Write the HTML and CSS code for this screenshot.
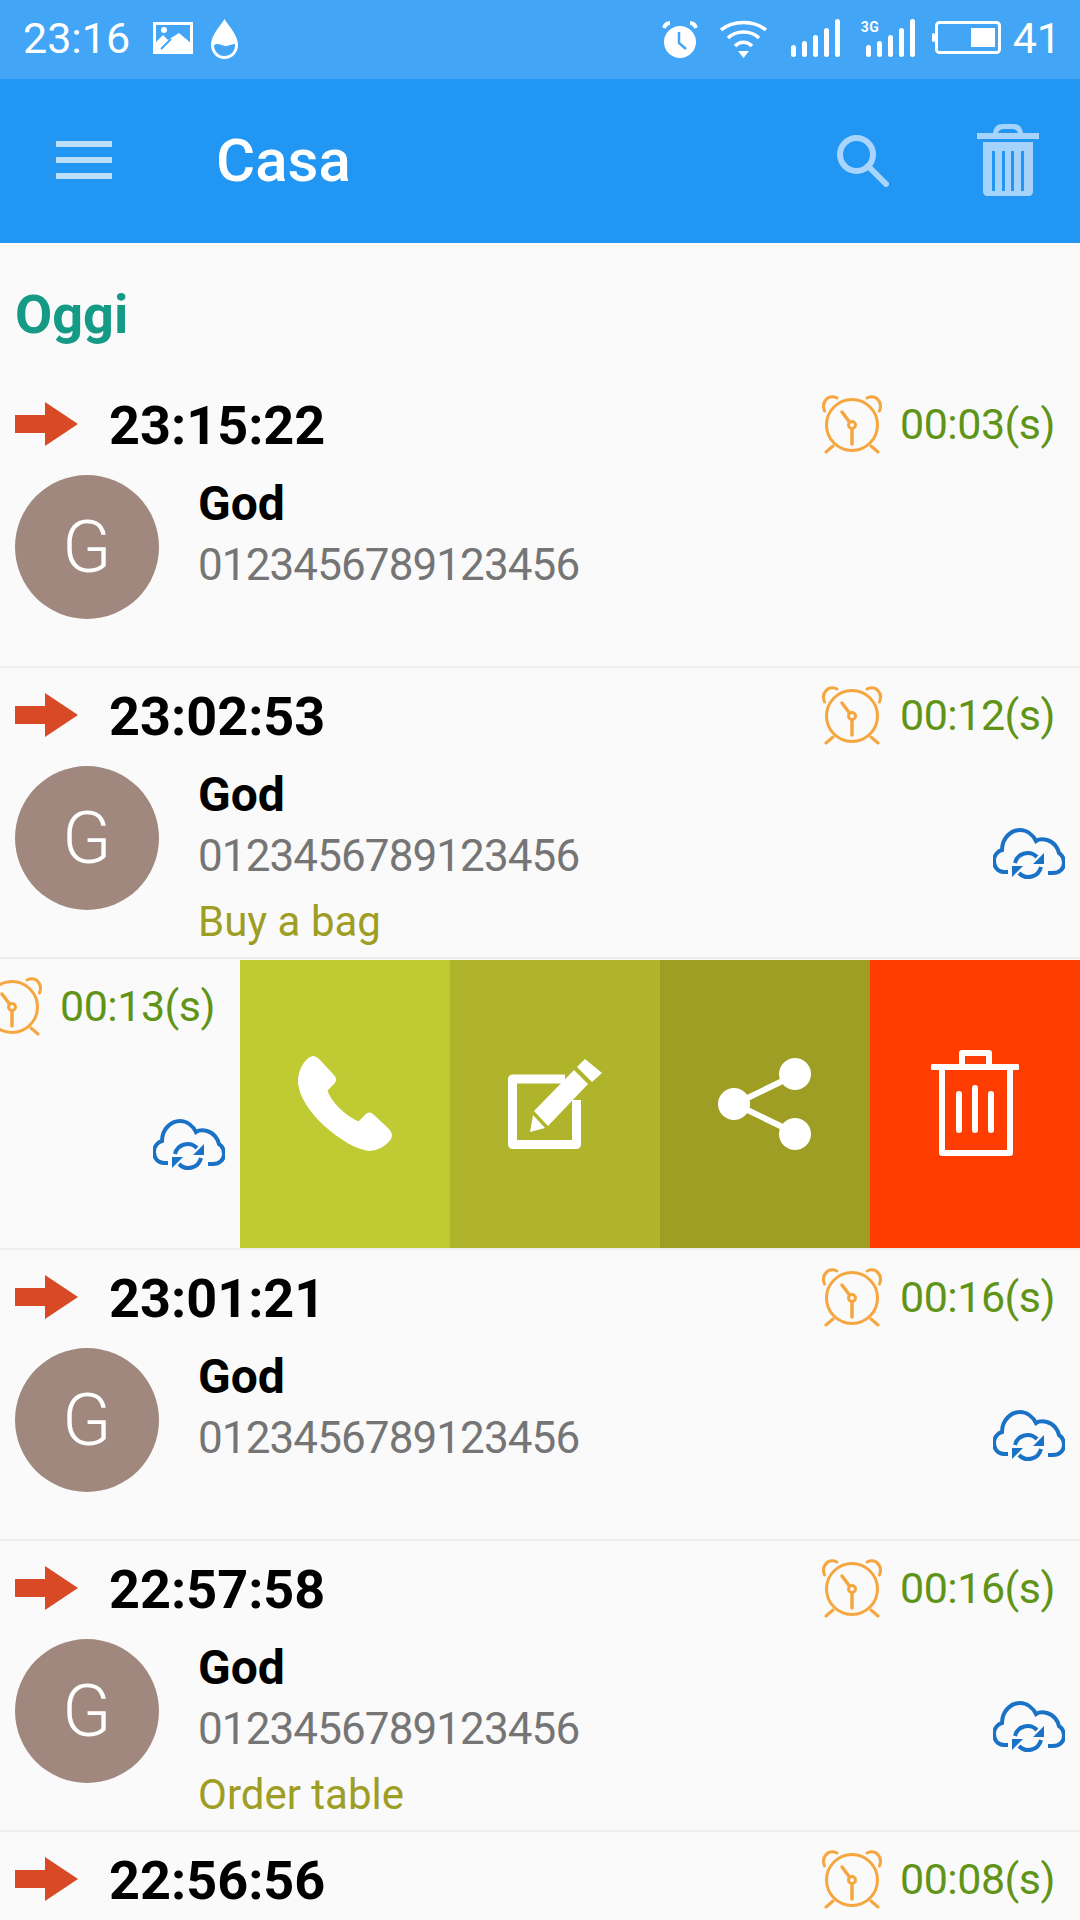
FILE: index.html
```html
<!DOCTYPE html>
<html lang="it">
<head>
<meta charset="utf-8">
<title>Casa</title>
<link rel="stylesheet" href="styles.css">
</head>
<body>
<svg class="defs" width="0" height="0" aria-hidden="true">
  <symbol id="i-alarm" viewBox="0 0 60 60">
    <g fill="none" stroke="#f6a63f" stroke-width="3" stroke-linecap="round">
      <circle cx="30" cy="31" r="25.500"/>
      <path d="M2.500 17 C-1 8 6 0 15 4"/>
      <path d="M57.500 17 C61 8 54 0 45 4"/>
      <path d="M4 58 L11 52 M56 58 L49 52"/>
      <circle cx="30" cy="31" r="3.500"/>
      <path d="M27.500 28 L20 18 M30 35 V50" stroke-width="3.500"/>
    </g>
  </symbol>
  <symbol id="i-cloud" viewBox="0 0 72 54">
    <g fill="none" stroke="#1a72c6" stroke-width="4">
      <path d="M15 44 H11 C4 44 1 38 1 33 C1 27 5 23 9 22 C9 10 18 2 27 2 C34 2 40 7 43 13 C46 11 50 11 54 12 C61 14 65 20 66 25 C69 27 71 31 71 35 C71 41 66 45 60 45 H55"/>
      <path d="M22 35 A13 13 0 0 1 44 29"/>
      <path d="M48 39 A13 13 0 0 1 26 45"/>
    </g>
    <path fill="#1a72c6" d="M51 25 V36 H40 Z M19 49 V38 H30 Z"/>
  </symbol>
  <symbol id="i-arrow" viewBox="0 0 63 44">
    <path fill="#d84a26" d="M0 13 H30 V0 L63 22 L30 44 V31 H0 Z"/>
  </symbol>
</svg>

<header class="status">
  <span class="status-text">23:16</span>
  <svg class="st-image" viewBox="0 0 40 32">
    <rect x="1.500" y="1.500" width="37" height="29" fill="none" stroke="#fff" stroke-width="3"/>
    <circle cx="11" cy="8" r="3" fill="#fff"/>
    <path fill="#fff" d="M1 31 V22 L10 13 L15 18 L26 11 L39 22 V31 Z"/>
    <path fill="none" stroke="#42a5f5" stroke-width="2" d="M8 27 L18 17"/>
  </svg>
  <svg class="st-drop" viewBox="0 0 27 40">
    <path fill="#fff" d="M13.500 0 C17 6 27 16 27 26 C27 34 21 40 13.500 40 C6 40 0 34 0 26 C0 16 10 6 13.500 0 Z"/>
    <path fill="#42a5f5" d="M3 26 C8 23 12 28 16 27 C19 26 21 25 24 25 C24.500 32 20 37 13.500 37 C7 37 3 32 3 26 Z"/>
  </svg>
  <span class="status-spacer"></span>
  <svg class="st-alarm" viewBox="0 0 36 37">
    <circle cx="18" cy="21" r="16" fill="#fff"/>
    <path fill="none" stroke="#fff" stroke-width="4" d="M2 7 C3 4 5 2 8 2 M34 7 C33 4 31 2 28 2"/>
    <path fill="none" stroke="#42a5f5" stroke-width="2.500" d="M17 11 V22 L24 28"/>
  </svg>
  <svg class="st-wifi" viewBox="0 0 47 39">
    <g fill="none" stroke="#fff" stroke-width="3.500">
      <path d="M1 11 C13 1 34 1 46 11"/>
      <path d="M8 19 C16 11 31 11 39 19"/>
      <path d="M15 27 C20 22 27 22 32 27"/>
    </g>
    <path fill="#fff" d="M18 32 H29 L23.500 39 Z"/>
  </svg>
  <svg class="st-signal" viewBox="0 0 50 38">
    <g fill="#fff">
      <rect x="0" y="26" width="5" height="12" rx="2.500"/>
      <rect x="11" y="22" width="5" height="16" rx="2.500"/>
      <rect x="22" y="16" width="5" height="22" rx="2.500"/>
      <rect x="33" y="9" width="5" height="29" rx="2.500"/>
      <rect x="44" y="0" width="5" height="38" rx="2.500"/>
    </g>
  </svg>
  <div class="st-signal-wrap">
    <span class="badge-3g">3G</span>
    <svg class="st-signal st-signal-b" viewBox="0 0 50 38">
      <g fill="#fff">
        <rect x="0" y="26" width="5" height="12" rx="2.500"/>
        <rect x="11" y="22" width="5" height="16" rx="2.500"/>
        <rect x="22" y="16" width="5" height="22" rx="2.500"/>
        <rect x="33" y="9" width="5" height="29" rx="2.500"/>
        <rect x="44" y="0" width="5" height="38" rx="2.500"/>
      </g>
    </svg>
  </div>
  <svg class="st-battery" viewBox="0 0 69 33">
    <rect x="4.500" y="1.500" width="63" height="30" rx="3" fill="none" stroke="#fff" stroke-width="3"/>
    <rect x="39" y="7" width="24" height="19" fill="#fff"/>
    <rect x="0" y="12" width="3" height="9" rx="1.500" fill="#fff"/>
  </svg>
  <span class="status-text status-num">41</span>
</header>

<nav class="appbar">
  <div class="menu"><i></i><i></i><i></i></div>
  <h1 class="title">Casa</h1>
  <svg class="search" viewBox="0 0 52 52">
    <g fill="none" stroke="#a8d5fb" stroke-width="6">
      <circle cx="19.500" cy="19.500" r="16.500"/>
      <path d="M31 31 L49 49" stroke-linecap="round"/>
    </g>
  </svg>
  <svg class="bar-trash" viewBox="0 0 62 72">
    <path fill="#a6d3fb" fill-rule="evenodd" d="M0 9 H16 C17 3 20 0 26 0 H36 C42 0 45 3 46 9 H62 V15 H0 Z M21 9 H41 C40 6 38 5 35 5 H27 C24 5 22 6 21 9 Z"/>
    <path fill="#a6d3fb" d="M6 18 H56 V68 C56 70 54 72 52 72 H10 C8 72 6 70 6 68 Z"/>
    <path fill="#2196f3" d="M15 27 H18 V67 H15 Z M25 27 H28 V67 H25 Z M34 27 H37 V67 H34 Z M44 27 H47 V67 H44 Z"/>
  </svg>
</nav>

<main class="list">
  <h2 class="section">Oggi</h2>

  <article class="row">
    <div class="row-top">
      <svg class="arrow"><use href="#i-arrow"/></svg>
      <span class="time">23:15:22</span>
      <svg class="alarm"><use href="#i-alarm"/></svg>
      <span class="dur">00:03(s)</span>
    </div>
    <div class="row-main">
      <div class="avatar">G</div>
      <div class="details">
        <div class="name">God</div>
        <div class="phone">0123456789123456</div>
      </div>
    </div>
  </article>

  <article class="row">
    <div class="row-top">
      <svg class="arrow"><use href="#i-arrow"/></svg>
      <span class="time">23:02:53</span>
      <svg class="alarm"><use href="#i-alarm"/></svg>
      <span class="dur">00:12(s)</span>
    </div>
    <div class="row-main">
      <div class="avatar">G</div>
      <div class="details">
        <div class="name">God</div>
        <div class="phone">0123456789123456</div>
        <div class="note">Buy a bag</div>
      </div>
      <svg class="cloud"><use href="#i-cloud"/></svg>
    </div>
  </article>

  <article class="row row-swiped">
    <div class="row-shift">
      <div class="row-top">
        <svg class="alarm"><use href="#i-alarm"/></svg>
        <span class="dur">00:13(s)</span>
      </div>
      <div class="row-main">
        <svg class="cloud"><use href="#i-cloud"/></svg>
      </div>
    </div>
    <div class="actions">
      <div class="action act-call">
        <svg class="ic-call" viewBox="-1 -1 96 97"><path fill="#fff" stroke="#fff" stroke-width="2" stroke-linejoin="round" d="M14 0 C17 0 19 2 21 4 L35 19 C38 22 37 25 35 27 L28 34 C31 45 45 60 61 67 L68 60 C70 57 73 57 76 60 L91 74 C95 78 95 81 92 85 C86 92 79 95 71 95 C45 91 4 56 0 27 C-1 17 5 3 14 0 Z"/></svg>
      </div>
      <div class="action act-edit">
        <svg class="ic-edit" viewBox="0 0 94 90">
          <path fill="none" stroke="#fff" stroke-width="9" stroke-linejoin="round" d="M57 20 H4.500 V85.500 H68.500 V41"/>
          <path fill="#fff" d="M26 52 L66 11 L80 25 L40 67 Z M22 73 L25 56 L37 69 Z M69 8 L77 0 L94 14 L84 23 Z"/>
        </svg>
      </div>
      <div class="action act-share">
        <svg class="ic-share" viewBox="0 0 94 92">
          <path fill="none" stroke="#fff" stroke-width="6" d="M77 17 L17 46 L77 75"/>
          <circle cx="77" cy="16" r="16" fill="#fff"/>
          <circle cx="16" cy="46" r="16" fill="#fff"/>
          <circle cx="77" cy="76" r="16" fill="#fff"/>
        </svg>
      </div>
      <div class="action act-del">
        <svg class="ic-trash" viewBox="0 0 88 106">
          <g fill="none" stroke="#fff" stroke-width="6" stroke-linecap="round" stroke-linejoin="round">
            <path d="M2 17 H86"/>
            <path d="M31 17 V3 H58 V17"/>
            <path d="M11 17 V103 H79 V17"/>
            <path d="M28 44 V80 M44 38 V80 M60 44 V80"/>
          </g>
        </svg>
      </div>
    </div>
  </article>

  <article class="row">
    <div class="row-top">
      <svg class="arrow"><use href="#i-arrow"/></svg>
      <span class="time">23:01:21</span>
      <svg class="alarm"><use href="#i-alarm"/></svg>
      <span class="dur">00:16(s)</span>
    </div>
    <div class="row-main">
      <div class="avatar">G</div>
      <div class="details">
        <div class="name">God</div>
        <div class="phone">0123456789123456</div>
      </div>
      <svg class="cloud"><use href="#i-cloud"/></svg>
    </div>
  </article>

  <article class="row">
    <div class="row-top">
      <svg class="arrow"><use href="#i-arrow"/></svg>
      <span class="time">22:57:58</span>
      <svg class="alarm"><use href="#i-alarm"/></svg>
      <span class="dur">00:16(s)</span>
    </div>
    <div class="row-main">
      <div class="avatar">G</div>
      <div class="details">
        <div class="name">God</div>
        <div class="phone">0123456789123456</div>
        <div class="note">Order table</div>
      </div>
      <svg class="cloud"><use href="#i-cloud"/></svg>
    </div>
  </article>

  <article class="row">
    <div class="row-top">
      <svg class="arrow"><use href="#i-arrow"/></svg>
      <span class="time">22:56:56</span>
      <svg class="alarm"><use href="#i-alarm"/></svg>
      <span class="dur">00:08(s)</span>
    </div>
  </article>
</main>
</body>
</html>
```
FILE: styles.css
```css
* { box-sizing: border-box; }
html, body { margin: 0; padding: 0; }
body {
  width: 1080px;
  height: 1920px;
  overflow: hidden;
  background: #fafafa;
  font-family: Roboto, "Liberation Sans", sans-serif;
}
.defs { display: block; height: 0; }

/* status bar */
.status {
  height: 79px;
  background: #42a5f5;
  display: flex;
  align-items: center;
  padding: 0 19px 0 23px;
  color: #fff;
}
.status-text { font-size: 43px; font-weight: 400; line-height: 1; margin-top: -3px; }
.status-num { margin-left: 12px; }
.status-spacer { flex: 1; }
.st-image { width: 40px; height: 32px; margin-left: 23px; margin-top: -4px; }
.st-drop { width: 27px; height: 40px; margin-left: 18px; margin-top: -1px; }
.st-alarm { width: 36px; height: 37px; margin-top: -1px; }
.st-wifi { width: 47px; height: 39px; margin-left: 22px; margin-top: -2px; }
.st-signal { width: 50px; height: 38px; margin-left: 24px; margin-top: -3px; display: block; }
.st-signal-wrap { position: relative; margin-left: 25px; margin-top: -3px; }
.st-signal-b { margin: 0; }
.badge-3g {
  position: absolute;
  left: -5px;
  top: 1px;
  font-size: 14px;
  font-weight: 700;
  line-height: 14px;
  letter-spacing: 0.5px;
}
.st-battery { width: 69px; height: 33px; margin-left: 16px; margin-top: -4px; }

/* app bar */
.appbar {
  height: 164px;
  background: #2196f3;
  display: flex;
  align-items: center;
  padding: 0 41px 0 56px;
}
.menu { width: 56px; display: flex; flex-direction: column; gap: 10px; margin-top: -2px; }
.menu i { display: block; height: 6px; background: #bbdefb; }
.title {
  margin: 0 0 0 104px;
  flex: 1;
  color: #fff;
  font-size: 60px;
  font-weight: 500;
  line-height: 1;
}
.search { width: 52px; height: 52px; margin-right: 88px; }
.bar-trash { width: 62px; height: 72px; margin-top: -2px; }

/* list */
.section {
  margin: 0;
  height: 134px;
  padding: 44px 0 0 15px;
  color: #159a85;
  font-size: 54px;
  font-weight: 700;
  line-height: 56px;
}
.row {
  height: 291px;
  border-bottom: 2px solid #eeeeee;
  position: relative;
  overflow: hidden;
}
.row-top {
  height: 98px;
  display: flex;
  align-items: center;
  padding: 0 25px 0 15px;
}
.arrow { width: 63px; height: 44px; margin-top: -4px; }
.time {
  margin-left: 31px;
  flex: 1;
  font-size: 54px;
  font-weight: 700;
  line-height: 1;
  color: #000;
}
.alarm { width: 60px; height: 60px; margin-top: -4px; }
.dur {
  margin-left: 18px;
  font-size: 43px;
  letter-spacing: -0.5px;
  line-height: 1;
  color: #5f9418;
  margin-top: -4px;
}
.row-main {
  display: flex;
  align-items: flex-start;
  padding: 0 15px;
}
.avatar {
  width: 144px;
  height: 144px;
  border-radius: 50%;
  background: #a1887f;
  color: #fff;
  font-size: 72px;
  font-weight: 300;
  display: flex;
  align-items: center;
  justify-content: center;
  flex: none;
}
.details { margin-left: 39px; flex: 1; }
.name { height: 56px; font-size: 48px; font-weight: 700; line-height: 58px; color: #000; }
.phone { height: 68px; font-size: 44px; letter-spacing: -0.9px; line-height: 68px; color: #757575; }
.note { height: 64px; font-size: 42px; line-height: 64px; color: #9e9d24; }
.cloud { width: 72px; height: 54px; margin-top: 62px; flex: none; }

/* swiped row */
.row-swiped { background: #fafafa; }
.row-shift { width: 1080px; margin-left: -840px; }
.row-shift .row-top,
.row-shift .row-main { justify-content: flex-end; }
.actions {
  position: absolute;
  top: 1px;
  right: 0;
  bottom: 0;
  width: 840px;
  display: grid;
  grid-template-columns: repeat(4, 210px);
}
.action { display: flex; align-items: center; justify-content: center; }
.act-call { background: #c0ca33; }
.act-edit { background: #afb42b; }
.act-share { background: #9e9d24; }
.act-del { background: #ff3d00; }
.ic-call { width: 94px; height: 95px; margin-top: -1px; }
.ic-edit { width: 94px; height: 90px; }
.ic-share { width: 94px; height: 92px; }
.ic-trash { width: 88px; height: 106px; margin-top: -3px; }
```
